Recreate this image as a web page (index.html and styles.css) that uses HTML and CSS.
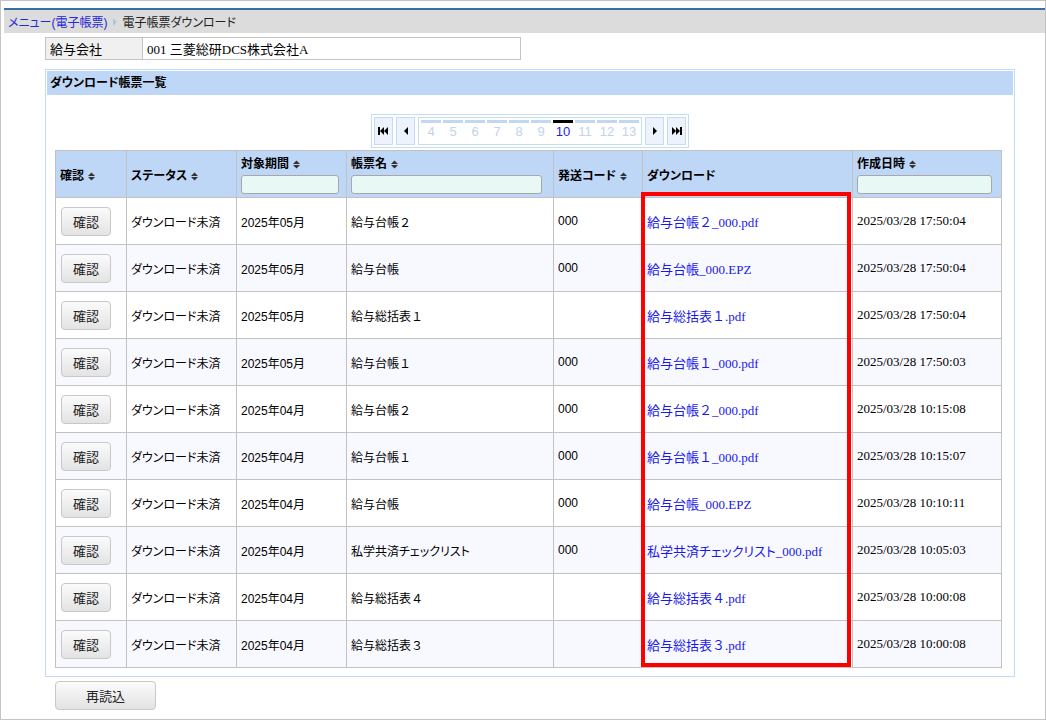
FILE: index.html
```html
<!DOCTYPE html>
<html lang="ja">
<head>
    <meta charset="UTF-8">
    <title>電子帳票ダウンロード</title>
    <link rel="stylesheet" href="styles.css">
</head>
<body>
    <div class="frame">
        <div class="breadcrumb">
            <a href="#">メニュー(電子帳票)</a>
            <span class="crumb-arrow"></span>
            <span>電子帳票ダウンロード</span>
        </div>

        <table class="company">
            <tr>
                <th>給与会社</th>
                <td>001 三菱総研DCS株式会社A</td>
            </tr>
        </table>

        <div class="panel">
            <div class="panel-title">ダウンロード帳票一覧</div>

            <div class="pager-wrap">
                <div class="pager">
                    <span class="pg-btn">
                        <svg width="11" height="8" viewBox="0 0 11 8"><rect x="0" y="0" width="2" height="8" fill="#000"/><polygon points="6,0 6,8 2,4" fill="#000"/><polygon points="10,0 10,8 6,4" fill="#000"/></svg>
                    </span>
                    <span class="pg-btn">
                        <svg width="4" height="8" viewBox="0 0 4 8"><polygon points="4,0 4,8 0,4" fill="#000"/></svg>
                    </span>
                    <div class="pg-strip">
                        <span class="pg-num">4</span>
                        <span class="pg-num">5</span>
                        <span class="pg-num">6</span>
                        <span class="pg-num">7</span>
                        <span class="pg-num">8</span>
                        <span class="pg-num">9</span>
                        <span class="pg-num current">10</span>
                        <span class="pg-num">11</span>
                        <span class="pg-num">12</span>
                        <span class="pg-num">13</span>
                    </div>
                    <span class="pg-btn">
                        <svg width="4" height="8" viewBox="0 0 4 8"><polygon points="0,0 0,8 4,4" fill="#000"/></svg>
                    </span>
                    <span class="pg-btn">
                        <svg width="11" height="8" viewBox="0 0 11 8"><polygon points="1,0 1,8 5,4" fill="#000"/><polygon points="5,0 5,8 9,4" fill="#000"/><rect x="9" y="0" width="2" height="8" fill="#000"/></svg>
                    </span>
                </div>
            </div>

            <div class="list-wrap">
                <table class="list">
                    <colgroup>
                        <col style="width:71px">
                        <col style="width:110px">
                        <col style="width:110px">
                        <col style="width:207px">
                        <col style="width:89px">
                        <col style="width:210px">
                        <col style="width:149px">
                    </colgroup>
                    <thead>
                        <tr>
                            <th>確認<svg class="sort" width="7" height="9" viewBox="0 0 7 9"><polygon points="0,4 7,4 3.5,0.5" /><polygon points="0,5 7,5 3.5,8.5" /></svg></th>
                            <th>ステータス<svg class="sort" width="7" height="9" viewBox="0 0 7 9"><polygon points="0,4 7,4 3.5,0.5" /><polygon points="0,5 7,5 3.5,8.5" /></svg></th>
                            <th><div>対象期間<svg class="sort" width="7" height="9" viewBox="0 0 7 9"><polygon points="0,4 7,4 3.5,0.5" /><polygon points="0,5 7,5 3.5,8.5" /></svg></div><input type="text" class="filter f-period"></th>
                            <th><div>帳票名<svg class="sort" width="7" height="9" viewBox="0 0 7 9"><polygon points="0,4 7,4 3.5,0.5" /><polygon points="0,5 7,5 3.5,8.5" /></svg></div><input type="text" class="filter f-name"></th>
                            <th>発送コード<svg class="sort" width="7" height="9" viewBox="0 0 7 9"><polygon points="0,4 7,4 3.5,0.5" /><polygon points="0,5 7,5 3.5,8.5" /></svg></th>
                            <th>ダウンロード</th>
                            <th><div>作成日時<svg class="sort" width="7" height="9" viewBox="0 0 7 9"><polygon points="0,4 7,4 3.5,0.5" /><polygon points="0,5 7,5 3.5,8.5" /></svg></div><input type="text" class="filter f-date"></th>
                        </tr>
                    </thead>
                    <tbody id="rows"></tbody>
                </table>
                <div class="dl-mark"></div>
            </div>
        </div>

        <button class="btn reload">再読込</button>
    </div>

    <script>
        const rows = [
            ['2025年05月', '給与台帳２', '000', '給与台帳２_000.pdf', '2025/03/28 17:50:04'],
            ['2025年05月', '給与台帳', '000', '給与台帳_000.EPZ', '2025/03/28 17:50:04'],
            ['2025年05月', '給与総括表１', '', '給与総括表１.pdf', '2025/03/28 17:50:04'],
            ['2025年05月', '給与台帳１', '000', '給与台帳１_000.pdf', '2025/03/28 17:50:03'],
            ['2025年04月', '給与台帳２', '000', '給与台帳２_000.pdf', '2025/03/28 10:15:08'],
            ['2025年04月', '給与台帳１', '000', '給与台帳１_000.pdf', '2025/03/28 10:15:07'],
            ['2025年04月', '給与台帳', '000', '給与台帳_000.EPZ', '2025/03/28 10:10:11'],
            ['2025年04月', '私学共済チェックリスト', '000', '私学共済チェックリスト_000.pdf', '2025/03/28 10:05:03'],
            ['2025年04月', '給与総括表４', '', '給与総括表４.pdf', '2025/03/28 10:00:08'],
            ['2025年04月', '給与総括表３', '', '給与総括表３.pdf', '2025/03/28 10:00:08']
        ];

        // 全角数字は詰めずに表示する
        const zen = s => s.replace(/[０-９]/g, d => `<span class="zen">${d}</span>`);

        const tbody = document.getElementById('rows');
        rows.forEach(r => {
            const tr = document.createElement('tr');
            tr.innerHTML = `
                <td class="c-btn"><button class="btn confirm">確認</button></td>
                <td class="goth">ダウンロード未済</td>
                <td class="goth">${r[0]}</td>
                <td class="goth">${zen(r[1])}</td>
                <td class="goth">${r[2]}</td>
                <td class="serif"><a href="#">${zen(r[3])}</a></td>
                <td class="serif">${r[4]}</td>
            `;
            tbody.appendChild(tr);
        });
    </script>
</body>
</html>
```

FILE: styles.css
```css
html, body {
    margin: 0;
    padding: 0;
    background-color: white;
}
body {
    font-family: "Liberation Serif", "Noto Sans CJK JP", serif;
    font-size: 13px;
    color: #000;
}
.frame {
    width: 1044px;
    height: 718px;
    border: 1px solid #c4c4c4;
    overflow: hidden;
}
.breadcrumb {
    margin: 7px 0 0 3px;
    height: 23px;
    border-top: 2px solid #3a6ea5;
    background-color: #dcdcdc;
    display: flex;
    align-items: center;
    padding-left: 4px;
    font-family: "Liberation Sans", "Noto Sans CJK JP", sans-serif;
    font-size: 12px;
    color: #222;
    font-feature-settings: "palt";
}
.breadcrumb a {
    color: #2626d6;
    text-decoration: none;
}
.crumb-arrow {
    width: 0;
    height: 0;
    margin: 0 6px 0 5px;
    border-top: 4px solid transparent;
    border-bottom: 4px solid transparent;
    border-left: 4px solid #b4c4dc;
}
.company {
    margin: 4px 0 0 44px;
    border-collapse: collapse;
    width: 476px;
}
.company th, .company td {
    border: 1px solid #c4c4c4;
    height: 21px;
    padding: 0 0 0 4px;
    text-align: left;
    font-weight: normal;
}
.company th {
    width: 92px;
    background-color: #f0f0f0;
    font-family: "Liberation Sans", "Noto Sans CJK JP", sans-serif;
}
.panel {
    margin: 9px 0 0 44px;
    width: 968px;
    height: 606px;
    border: 1px solid #c2daf4;
}
.panel-title {
    margin: 1px;
    height: 24px;
    line-height: 24px;
    padding-left: 3px;
    background-color: #bfd7f6;
    font-family: "Liberation Sans", "Noto Sans CJK JP", sans-serif;
    font-size: 12px;
    font-weight: bold;
    font-feature-settings: "palt";
}
.pager-wrap {
    display: flex;
    justify-content: center;
    margin-top: 19px;
}
.pager {
    display: flex;
    gap: 3px;
    padding: 2px;
    border: 1px solid #c6dcf5;
    background-color: white;
}
.pg-btn {
    width: 17px;
    height: 26px;
    border: 1px solid #c6dcf5;
    background-color: #ecf3fd;
    display: flex;
    align-items: center;
    justify-content: center;
}
.pg-strip {
    display: flex;
    gap: 2px;
    padding: 0 2px;
    border: 1px solid #c6dcf5;
    height: 26px;
}
.pg-num {
    width: 20px;
    border-top: 3px solid #c2d8f2;
    margin-top: 2px;
    text-align: center;
    font-family: "Liberation Sans", sans-serif;
    font-size: 13px;
    line-height: 18px;
    color: #c4d2ea;
}
.pg-num.current {
    border-top-color: #000;
    color: #1a1aff;
}
.list-wrap {
    position: relative;
    margin: 2px 0 0 9px;
    width: 946px;
}
.list {
    width: 946px;
    border-collapse: collapse;
    table-layout: fixed;
}
.list th, .list td {
    border: 1px solid #c2c2c2;
    height: 46px;
    padding: 0 0 0 4px;
    text-align: left;
    vertical-align: middle;
    white-space: nowrap;
    font-feature-settings: "palt";
}
.list th {
    background-color: #bfd7f6;
    font-family: "Liberation Sans", "Noto Sans CJK JP", sans-serif;
    font-size: 12px;
    font-weight: bold;
}
.list th div {
    line-height: 16px;
    margin: 1px 0 3px;
}
.sort {
    margin-left: 4px;
    vertical-align: -1px;
    fill: #333;
}
.filter {
    display: block;
    height: 19px;
    box-sizing: border-box;
    border: 1px solid #a8a8a8;
    border-radius: 3px;
    background-color: #e8f8f4;
    padding: 0;
}
.f-period {
    width: 98px;
}
.f-name {
    width: 191px;
}
.f-date {
    width: 135px;
}
.list tbody tr:nth-child(even) td {
    background-color: #f8f8ff;
}
.list td.goth {
    font-family: "Liberation Sans", "Noto Sans CJK JP", sans-serif;
    font-size: 12px;
}
.list td.serif {
    font-size: 13px;
}
.zen {
    font-feature-settings: normal;
}
.list td.c-btn {
    padding-left: 5px;
}
.list a {
    color: #1818e8;
    text-decoration: none;
}
.btn {
    font-family: "Liberation Sans", "Noto Sans CJK JP", sans-serif;
    font-size: 13px;
    color: #222;
    border: 1px solid #c8c8c8;
    border-radius: 4px;
    background: linear-gradient(#fbfbfb, #e3e3e3);
    padding: 0;
    cursor: pointer;
}
.confirm {
    width: 50px;
    height: 29px;
}
.reload {
    display: block;
    margin: 4px 0 0 54px;
    width: 101px;
    height: 29px;
}
/* 枠線でダウンロード列を囲む */
.dl-mark {
    position: absolute;
    left: 586px;
    top: 42px;
    width: 202px;
    height: 467px;
    border: 4px solid #ff0000;
    pointer-events: none;
}
```
